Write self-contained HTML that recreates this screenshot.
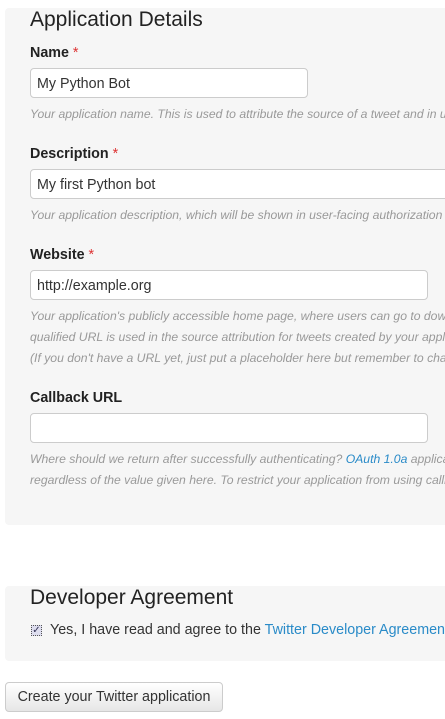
<!DOCTYPE html>
<html><head><meta charset="utf-8"><style>
html,body{margin:0;width:445px;height:719px;overflow:hidden}
body{background:#fff;font-family:"Liberation Sans",Arial,sans-serif;color:#333;position:relative}
#w{position:absolute;left:0;top:0;width:445px;height:719px;overflow:hidden}
.panel{position:absolute;left:5px;width:440px;background:#f6f6f6;border-radius:4px 0 0 4px}
.a{position:absolute;white-space:nowrap}
h2{position:absolute;margin:0;font-weight:normal;font-size:21px;color:#222;left:30px;white-space:nowrap}
.lbl{font-weight:bold;font-size:14.3px;color:#222;left:30px}
.lbl i{color:#d33;font-style:normal;font-weight:normal}
.inp{position:absolute;left:30px;background:#fff;border:1px solid #ccc;border-radius:4px;box-sizing:border-box;height:30px;font-size:14.3px;padding:7px 6px;color:#333}
.help{font-style:italic;font-size:12.2px;color:#999;left:30px;line-height:21px}
.help b{font-weight:normal;color:#2a8bc8}
</style></head><body><div id="w">
<div class="panel" style="top:8px;height:517px"></div>
<div class="panel" style="top:586px;height:75px"></div>
<h2 style="top:8px">Application Details</h2>
<div class="a lbl" style="top:45px">Name <i>*</i></div>
<div class="inp" style="top:68px;width:278px">My Python Bot</div>
<div class="a help" style="top:104px">Your application name. This is used to attribute the source of a tweet and in user-facing</div>
<div class="a lbl" style="top:146px">Description <i>*</i></div>
<div class="inp" style="top:169px;width:430px">My first Python bot</div>
<div class="a help" style="top:205px">Your application description, which will be shown in user-facing authorization screens</div>
<div class="a lbl" style="top:247px">Website <i>*</i></div>
<div class="inp" style="top:270px;width:398px">http://example.org</div>
<div class="a help" style="top:306px">Your application's publicly accessible home page, where users can go to download<br>qualified URL is used in the source attribution for tweets created by your application<br>(If you don't have a URL yet, just put a placeholder here but remember to change it later.)</div>
<div class="a lbl" style="top:390px">Callback URL</div>
<div class="inp" style="top:413px;width:398px"></div>
<div class="a help" style="top:449px">Where should we return after successfully authenticating? <b>OAuth 1.0a</b> applications<br>regardless of the value given here. To restrict your application from using callbacks</div>
<h2 style="top:586px">Developer Agreement</h2>
<div class="a" style="left:31px;top:625px;width:11px;height:11px;border:1px dotted #555;background:#dde;box-sizing:border-box;font-size:10px;line-height:9px;color:#335;text-align:center">✓</div>
<div class="a" style="left:50px;top:622px;font-size:14.3px;color:#333">Yes, I have read and agree to the <span style="color:#2a8bc8">Twitter Developer Agreement</span></div>
<div class="a" style="left:5px;top:682px;width:218px;height:30px;box-sizing:border-box;border:1px solid #ccc;border-radius:4px;background:linear-gradient(#fff,#e6e6e6);font-size:14.3px;color:#333;text-align:center;line-height:28px">Create your Twitter application</div>
</div></body></html>
